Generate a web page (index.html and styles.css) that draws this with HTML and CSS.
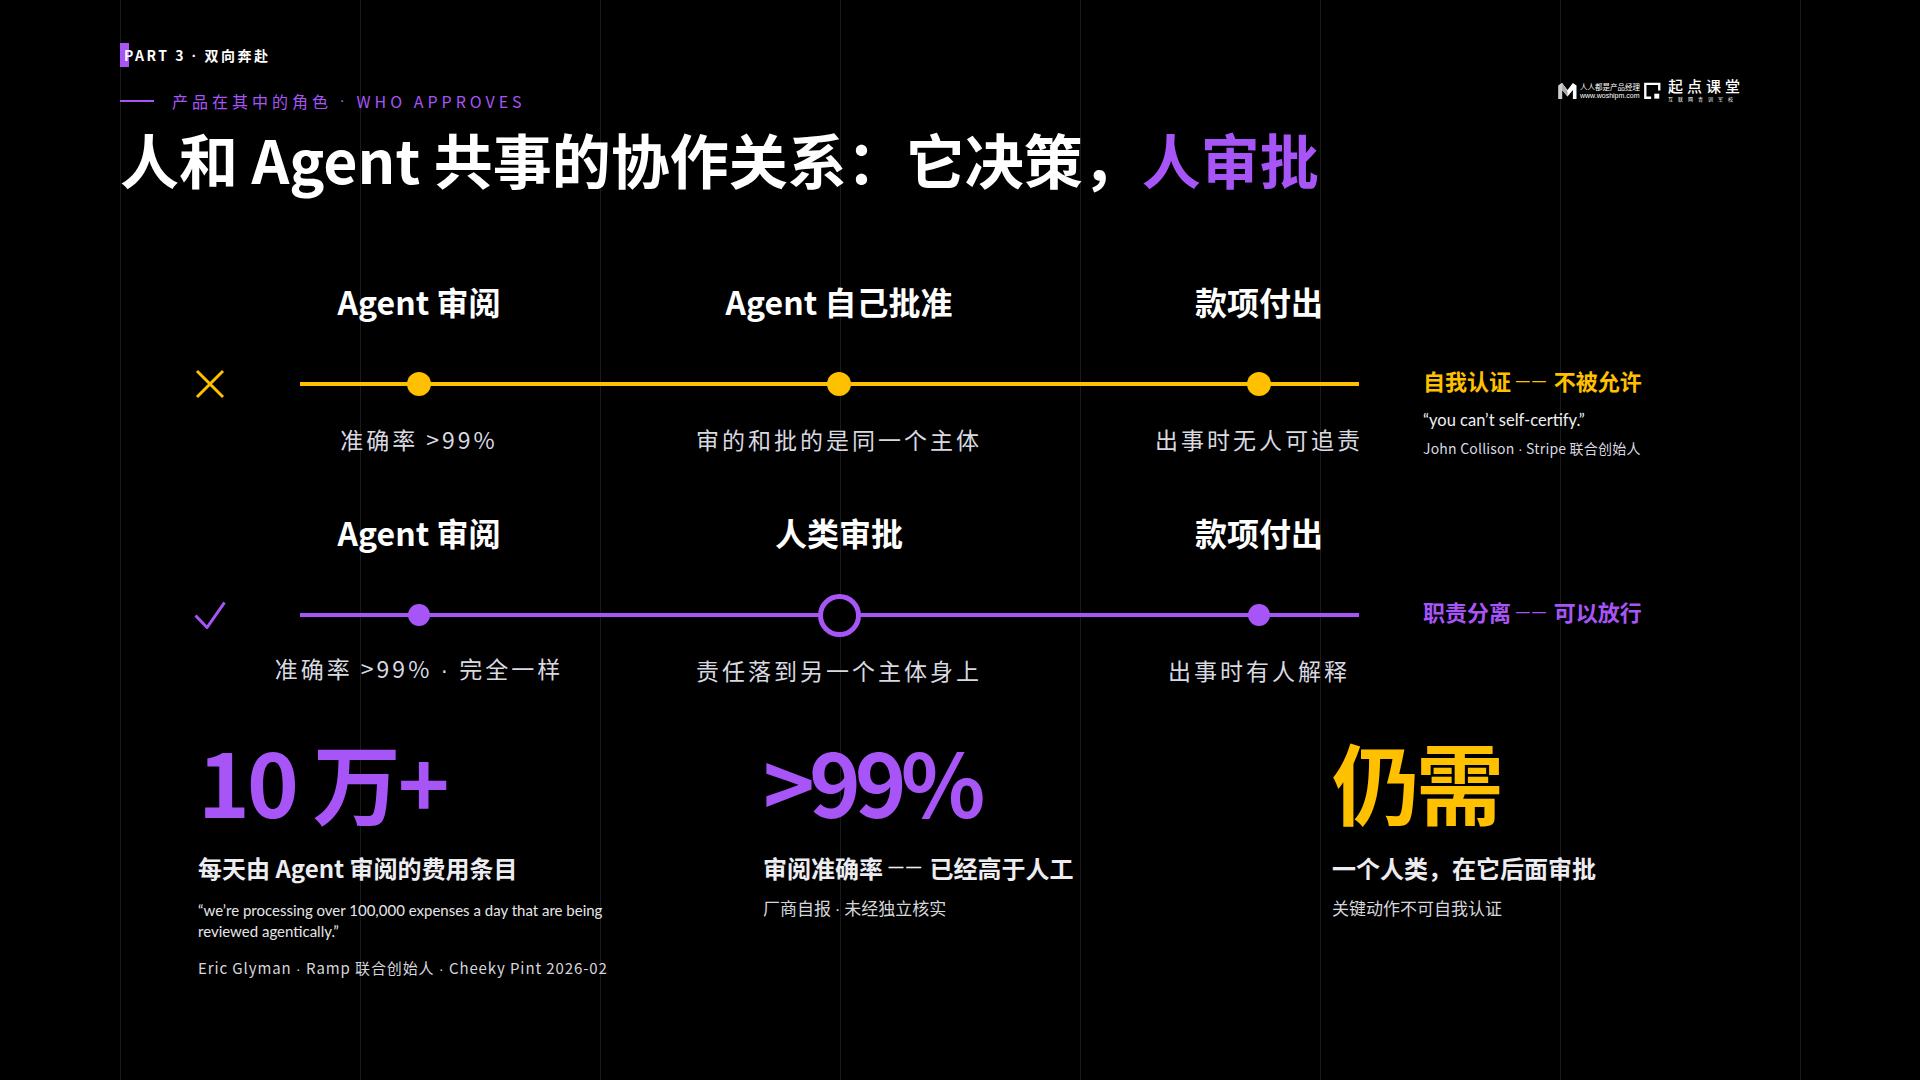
FILE: index.html
```html
<!DOCTYPE html>
<html lang="zh-CN">
<head>
<meta charset="utf-8">
<title>人和 Agent 共事的协作关系</title>
<link rel="stylesheet" href="styles.css">
</head>
<body>
<div class="slide">
  <header class="top">
    <div class="heading">
      <div class="part">PART 3 <span class="sep">·</span> 双向奔赴</div>
      <div class="kicker"><span class="kicker-line"></span>产品在其中的角色 <span class="sep">·</span> WHO APPROVES</div>
      <h1 class="title">人和 Agent 共事的协作关系：它决策，<span class="hl">人审批</span></h1>
    </div>
    <div class="logo">
      <svg class="logo-m" viewBox="0 0 22 20" width="21" height="18">
        <path d="M1 19 V4 L5 1 L11 9 L17 1 L21 4 V19 H17 V9 L11 16 L5 9 V19 Z" fill="#ffffff"/>
        <path d="M1 19 V4 L5 1 V19 Z" fill="#cfcfcf"/>
        <path d="M5 9 L11 16 L11 10 L5 1 Z" fill="#a9a9a9"/>
      </svg>
      <div class="logo-t1"><span class="lt-a">人人都是产品经理</span><span class="lt-b">www.woshipm.com</span></div>
      <svg class="logo-q" viewBox="0 0 20 20" width="19" height="18">
        <path d="M8.5 17.5 H2 V2 H17.5 V9.5" fill="none" stroke="#ffffff" stroke-width="2.6"/>
        <rect x="12" y="13" width="5.5" height="5.5" fill="#ffffff"/>
      </svg>
      <div class="logo-t2"><span class="lt-c">起点课堂</span><span class="lt-d">互联网青训军校</span></div>
    </div>
  </header>

  <section class="flow flow-no">
    <div class="step-title c1">Agent 审阅</div>
    <div class="step-title c2">Agent 自己批准</div>
    <div class="step-title c3">款项付出</div>

    <div class="mark">
      <svg viewBox="0 0 32 32" width="32" height="32">
        <path d="M3 3 L29 29 M29 3 L3 29" stroke="#ffc000" stroke-width="3" fill="none"/>
      </svg>
    </div>
    <div class="track"></div>
    <div class="node c1"><span class="dot"></span></div>
    <div class="node c2"><span class="dot"></span></div>
    <div class="node c3"><span class="dot"></span></div>
    <div class="verdict">
      <div class="verdict-title">自我认证 <span class="dash">——</span> 不被允许</div>
      <div class="verdict-quote">“you can’t self-certify.”</div>
      <div class="verdict-cite">John Collison <span class="sep">·</span> Stripe 联合创始人</div>
    </div>

    <div class="step-note c1">准确率 &gt;99%</div>
    <div class="step-note c2">审的和批的是同一个主体</div>
    <div class="step-note c3">出事时无人可追责</div>
  </section>

  <section class="flow flow-yes">
    <div class="step-title c1">Agent 审阅</div>
    <div class="step-title c2">人类审批</div>
    <div class="step-title c3">款项付出</div>

    <div class="mark">
      <svg viewBox="0 0 32 28" width="32" height="28">
        <path d="M1.5 14.5 L13 26.5 L30.5 1.5" stroke="#a855f7" stroke-width="3" fill="none"/>
      </svg>
    </div>
    <div class="track"></div>
    <div class="node c1"><span class="dot"></span></div>
    <div class="node c2"><span class="ring"></span></div>
    <div class="node c3"><span class="dot"></span></div>
    <div class="verdict">
      <div class="verdict-title">职责分离 <span class="dash">——</span> 可以放行</div>
    </div>

    <div class="step-note c1">准确率 &gt;99% <span class="sep">·</span> 完全一样</div>
    <div class="step-note c2">责任落到另一个主体身上</div>
    <div class="step-note c3">出事时有人解释</div>
  </section>

  <section class="stats">
    <div class="stat">
      <div class="stat-num purple tight-a">10 万+</div>
      <div class="stat-label">每天由 Agent 审阅的费用条目</div>
      <div class="stat-quote">“we’re processing over 100,000 expenses a day that are being<br>reviewed agentically.”</div>
      <div class="stat-cite">Eric Glyman <span class="sep">·</span> Ramp 联合创始人 <span class="sep">·</span> Cheeky Pint 2026-02</div>
    </div>
    <div class="stat">
      <div class="stat-num purple tight-b">&gt;99%</div>
      <div class="stat-label">审阅准确率 <span class="dash">——</span> 已经高于人工</div>
      <div class="stat-sub">厂商自报 <span class="sep">·</span> 未经独立核实</div>
    </div>
    <div class="stat">
      <div class="stat-num yellow tight-c">仍需</div>
      <div class="stat-label">一个人类，在它后面审批</div>
      <div class="stat-sub">关键动作不可自我认证</div>
    </div>
  </section>
</div>
</body>
</html>
```

FILE: styles.css
```css
* {
  margin: 0;
  padding: 0;
  box-sizing: border-box;
}

html, body {
  width: 1920px;
  height: 1080px;
}

body {
  background: #000;
  color: #fff;
  font-family: "Noto Sans CJK SC", "Noto Sans", sans-serif;
  overflow: hidden;
}

.slide {
  width: 1920px;
  height: 1080px;
  padding: 43px 0 0 120px;
  background-color: #000;
  background-image: linear-gradient(to right, #1a1a1a 0, #1a1a1a 1px, transparent 1px);
  background-size: 240px 100%;
  background-position: 120px 0;
  background-repeat: repeat-x;
}

/* Latin punctuation rendered proportionally */
.sep {
  font-family: "Liberation Sans", sans-serif;
}

.dash {
  font-family: "Liberation Sans", sans-serif;
  font-size: 0.62em;
  letter-spacing: 0.2em;
  vertical-align: 0.4em;
  line-height: 0;
}

/* ---------- header ---------- */
.top {
  display: flex;
  justify-content: space-between;
  align-items: flex-start;
  padding-right: 176px;
}

.part {
  font-size: 14px;
  font-weight: 700;
  line-height: 24px;
  letter-spacing: 2.5px;
  padding-left: 4px;
  color: #fff;
  background: linear-gradient(#a855f7, #a855f7) no-repeat 0 0 / 9px 24px;
}

.kicker {
  display: flex;
  align-items: center;
  margin-top: 21px;
  font-size: 16px;
  line-height: 24px;
  letter-spacing: 4px;
  color: #a855f7;
  white-space: pre;
}

.kicker-line {
  width: 34px;
  height: 2px;
  background: #a855f7;
  margin-right: 18px;
}

.title {
  margin-top: 10px;
  font-size: 59px;
  font-weight: 700;
  line-height: 72px;
  color: #fff;
  white-space: nowrap;
}

.title .hl {
  color: #a855f7;
}

/* ---------- logo ---------- */
.logo {
  margin-top: 36px;
  display: flex;
  align-items: center;
  color: #fff;
}

.logo-m {
  display: block;
  margin-right: 2px;
}

.logo-t1 {
  display: flex;
  flex-direction: column;
  margin-right: 3px;
}

.lt-a {
  font-size: 7.5px;
  line-height: 9px;
  white-space: nowrap;
}

.lt-b {
  font-family: "Liberation Sans", sans-serif;
  font-size: 7px;
  line-height: 9px;
  white-space: nowrap;
}

.logo-q {
  display: block;
  margin-right: 6px;
}

.logo-t2 {
  display: flex;
  flex-direction: column;
}

.lt-c {
  font-size: 15px;
  font-weight: 500;
  line-height: 14px;
  letter-spacing: 4px;
  white-space: nowrap;
}

.lt-d {
  font-size: 5px;
  line-height: 7px;
  letter-spacing: 5px;
  white-space: nowrap;
  margin-top: 2px;
}

/* ---------- flows ---------- */
.flow {
  display: grid;
  grid-template-columns: 180px 238px 602px 238px 1fr;
  grid-template-rows: 81px 40px 52px;
}

.flow-no {
  margin-top: 88px;
  --accent: #ffc000;
}

.flow-yes {
  margin-top: 58px;
  --accent: #a855f7;
}

.c1 { grid-column: 2; }
.c2 { grid-column: 3; }
.c3 { grid-column: 4; }

.step-title {
  grid-row: 1;
  justify-self: center;
  align-self: start;
  margin-top: -3px;
  font-size: 32px;
  font-weight: 700;
  line-height: 42px;
  white-space: nowrap;
  color: #fff;
}

.mark {
  grid-row: 2;
  grid-column: 1;
  justify-self: center;
  align-self: center;
  display: flex;
}

.track {
  grid-row: 2;
  grid-column: 2 / 5;
  align-self: center;
  height: 4px;
  margin-right: 19px;
  background: var(--accent);
}

.node {
  grid-row: 2;
  justify-self: center;
  align-self: center;
  display: flex;
  z-index: 1;
}

.dot {
  width: 24px;
  height: 24px;
  border-radius: 50%;
  background: var(--accent);
}

.flow-yes .dot {
  width: 22px;
  height: 22px;
}

.ring {
  width: 43px;
  height: 43px;
  border-radius: 50%;
  border: 5px solid var(--accent);
  background: #000;
}

.step-note {
  grid-row: 3;
  justify-self: center;
  align-self: end;
  font-size: 23px;
  line-height: 34px;
  letter-spacing: 3px;
  white-space: nowrap;
  color: #d9d9e0;
}

.verdict {
  grid-row: 2 / 4;
  grid-column: 5;
  padding-left: 45px;
  white-space: nowrap;
}

.verdict-title {
  margin-top: -3px;
  font-size: 22px;
  font-weight: 700;
  line-height: 38px;
  color: var(--accent);
}

.verdict-quote {
  margin-top: 10px;
  font-family: "Lato", "Noto Sans CJK SC", sans-serif;
  font-size: 16.5px;
  line-height: 22px;
  color: #f0f0f3;
}

.verdict-cite {
  margin-top: 6px;
  font-size: 14px;
  line-height: 22px;
  letter-spacing: 0.2px;
  color: #d9d9e0;
}

/* ---------- stats ---------- */
.stats {
  display: grid;
  grid-template-columns: 565px 569px 1fr;
  margin: 43px 0 0 78px;
}

.stat-num {
  font-size: 88px;
  font-weight: 700;
  line-height: 100px;
  white-space: nowrap;
}

.tight-a { letter-spacing: -3px; }
.tight-b { letter-spacing: -6px; }
.tight-c { letter-spacing: -4px; }

.purple { color: #a855f7; }
.yellow { color: #ffc000; }

.stat-label {
  margin-top: 22px;
  font-size: 24px;
  font-weight: 700;
  line-height: 32px;
  color: #ececf1;
  white-space: nowrap;
}

.stat-quote {
  margin-top: 16px;
  font-family: "Lato", "Noto Sans CJK SC", sans-serif;
  font-size: 15px;
  line-height: 21px;
  color: #e6e6ea;
  white-space: nowrap;
}

.stat-cite {
  margin-top: 16px;
  font-size: 15px;
  line-height: 20px;
  letter-spacing: 0.9px;
  color: #d6d6dc;
  white-space: nowrap;
}

.stat-sub {
  margin-top: 13px;
  font-size: 17px;
  line-height: 22px;
  color: #d6d6dc;
  white-space: nowrap;
}
```
